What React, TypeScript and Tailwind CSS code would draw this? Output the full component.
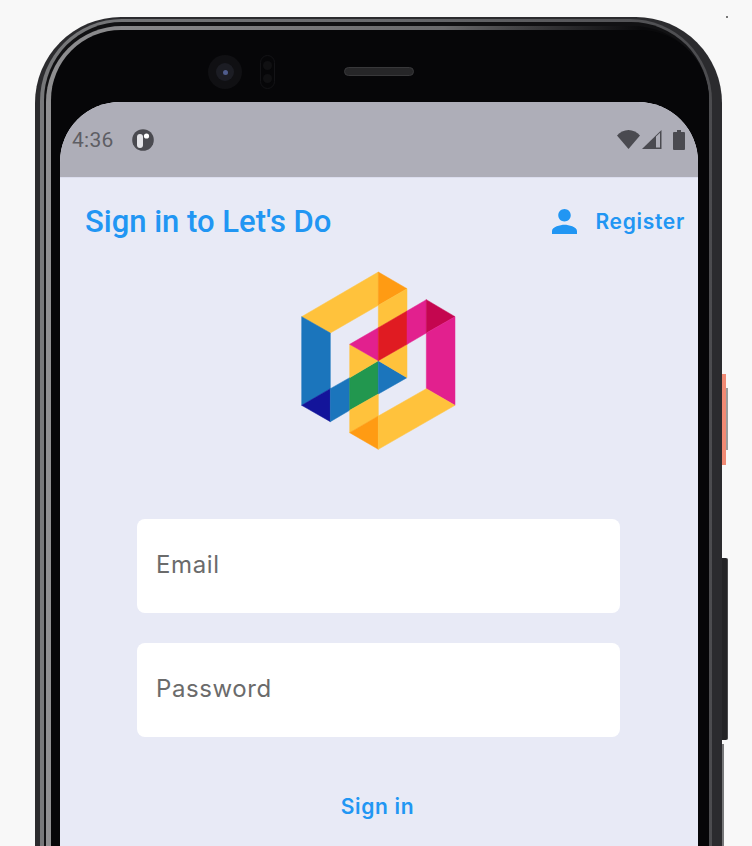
const logoParts: [string, string][] = [
  ['#FFC23C', '35,164 265,30 265,130 121,213'],
  ['#FF9B13', '265,30 351,80 265,130'],
  ['#FFC23C', '265,130 351,80 351,147 265,197'],
  ['#1B75BC', '35,164 121,213 121,380 35,430'],
  ['#13149A', '35,430 121,380 121,479'],
  ['#1B75BC', '121,380 179,347 179,445 121,479'],
  ['#22974F', '179,347 265,296 265,396 179,445'],
  ['#1B75BC', '265,296 351,347 265,396'],
  ['#FFC23C', '265,296 351,247 351,347'],
  ['#FFC23C', '179,247 265,296 179,347'],
  ['#E2208E', '179,247 265,197 265,296'],
  ['#E01B22', '265,197 351,147 351,247 265,296'],
  ['#E2208E', '351,147 409,113 409,213 351,247'],
  ['#C4064F', '409,113 495,164 409,213'],
  ['#E2208E', '409,213 495,164 495,430 409,380'],
  ['#FFC23C', '179,445 265,396 265,462 179,512'],
  ['#FF9B13', '179,512 265,462 265,562'],
  ['#FFC23C', '265,462 409,380 495,430 265,562'],
];

function Logo() {
  return (
    <svg viewBox="0 0 540 588" className="w-[180px] h-[196px]">
      {logoParts.map(([fill, points]) => (
        <polygon key={points} fill={fill} stroke={fill} strokeWidth="1.5" points={points} />
      ))}
    </svg>
  );
}

function StatusBar() {
  return (
    <div className="h-[76px] bg-[#aeaeb8] border-b border-[#dcdeee] flex items-center pl-[12px] pr-[13px]">
      <span className="pt-[2px] font-['Roboto',sans-serif] text-[21px] text-[#5e5e64] tracking-[0.3px]">4:36</span>
      <svg viewBox="0 0 22 22" className="w-[22px] h-[22px] ml-[18px]">
        <circle cx="11" cy="11" r="10.8" fill="#4a4a50" />
        <rect x="5" y="5" width="6" height="14" rx="3" fill="#e4e4e8" />
        <circle cx="14.5" cy="7" r="2.6" fill="#fff" />
      </svg>
      <div className="ml-auto flex items-center">
        <svg viewBox="0 0 23 19" className="w-[23px] h-[19px]">
          <path d="M0 5.5C3 2.2 7 0 11.5 0S20 2.2 23 5.5L11.5 19z" fill="#4a4a50" />
        </svg>
        <svg viewBox="0 0 20 19" className="w-[20px] h-[19px] ml-[2px]">
          <path d="M0 19 19.5 0v19z" fill="#4a4a50" />
          <path d="M14 6.5 18 2.7V17.6H14z" fill="#aeaeb8" />
        </svg>
        <svg viewBox="0 0 12 20" className="w-[12px] h-[20px] ml-[11px]">
          <path d="M4 0h4v2h3a1 1 0 0 1 1 1v16a1 1 0 0 1-1 1H1a1 1 0 0 1-1-1V3a1 1 0 0 1 1-1h3z" fill="#4a4a50" />
        </svg>
      </div>
    </div>
  );
}

function Field({ placeholder }: { placeholder: string }) {
  return (
    <input
      type="text"
      placeholder={placeholder}
      className="w-[483px] h-[94px] bg-white rounded-[8px] pl-[19px] pb-[4px] font-['Inter',sans-serif] text-[24px] tracking-[0.6px] text-[#6b6b6b] placeholder:text-[#6b6b6b] outline-none"
    />
  );
}

export default function App() {
  return (
    <div className="relative h-[846px] overflow-hidden bg-[#f8f8f8] pl-[35px] pt-[17px]">
      {/* side buttons */}
      <div className="absolute left-[722px] top-[374px] w-[4px] h-[91px] bg-[#f08a74]" />
      <div className="absolute left-[726px] top-[388px] w-[2px] h-[62px] bg-[#9a9a9a]" />
      <div className="absolute left-[722px] top-[558px] w-[6px] h-[182px] bg-[#242426] border-r border-[#4a4a4c] rounded-r-[2px]" />
      <div className="absolute left-[722px] top-[744px] w-[2px] h-[102px] bg-[#77787a]" />
      <div className="absolute left-[726px] top-[16px] w-[2px] h-[2px] bg-[#777]" />

      {/* phone frame */}
      <div className="w-[687px] h-[900px] rounded-t-[86px] bg-[#2b2b2e] pt-[2px] pl-[5px] pr-[10px]">
        <div className="h-full rounded-t-[82px] bg-linear-to-r from-[#77787a] via-[#6a6b6e] to-[#4c4c4f] pt-[3px] pl-[4px] pr-[3px]">
          <div className="h-full rounded-t-[78px] bg-[#111113] pt-[4px] pl-[2px]">
            <div className="h-full rounded-t-[76px] bg-linear-to-r from-[#8f8f91] via-[#6a6a6c] via-60% to-[#0a0a0c] to-90% pt-[4px] pl-[5px]">
              <div className="h-full rounded-t-[70px] bg-[#060608] pl-[9px] pr-[11px]">
                <div className="h-[72px] flex items-start pt-[25px]">
                  <div className="ml-[148px] w-[34px] h-[34px] rounded-full bg-[#101013] flex items-center justify-center">
                    <div className="w-[18px] h-[18px] rounded-full bg-[#1c1d24] flex items-center justify-center">
                      <div className="w-[5px] h-[5px] rounded-full bg-[#4f5c8c]" />
                    </div>
                  </div>
                  <div className="ml-[18px] w-[15px] h-[34px] rounded-full border border-[#131316] flex flex-col items-center justify-around py-[3px]">
                    <div className="w-[9px] h-[9px] rounded-full bg-[#101012]" />
                    <div className="w-[9px] h-[9px] rounded-full bg-[#101012]" />
                  </div>
                  <div className="ml-[69px] mt-[12px] w-[70px] h-[9px] rounded-full bg-[#262628] border border-[#38383a]" />
                </div>

                <div className="h-[800px] rounded-t-[60px] overflow-hidden bg-[#e8eaf6]">
                  <StatusBar />
                  <div className="flex items-center justify-between pl-[25px] pr-[13px] pt-[24px]">
                    <h1 className="font-['Roboto',sans-serif] font-medium text-[31px] leading-[40px] text-[#2196f3]">
                      Sign in to Let's Do
                    </h1>
                    <div className="flex items-center">
                      <svg viewBox="4 4 16 16" className="w-[25px] h-[25px] -mt-[2px] fill-[#2196f3]">
                        <path d="M12 12c2.21 0 4-1.79 4-4s-1.79-4-4-4-4 1.79-4 4 1.79 4 4 4zm0 2c-2.67 0-8 1.34-8 4v2h16v-2c0-2.66-5.33-4-8-4z" />
                      </svg>
                      <span className="ml-[18px] font-['Inter',sans-serif] font-semibold text-[21px] tracking-[0.7px] text-[#2196f3]">Register</span>
                    </div>
                  </div>
                  <div className="flex flex-col items-center pr-[1px]">
                    <div className="mt-[20px] ml-[3px]">
                      <Logo />
                    </div>
                    <div className="mt-[61px] flex flex-col gap-[30px]">
                      <Field placeholder="Email" />
                      <Field placeholder="Password" />
                    </div>
                    <span className="mt-[54px] mr-[2px] font-['Inter',sans-serif] font-semibold text-[21px] tracking-[0.7px] text-[#2196f3]">Sign in</span>
                  </div>
                </div>
              </div>
            </div>
          </div>
        </div>
      </div>
    </div>
  );
}
